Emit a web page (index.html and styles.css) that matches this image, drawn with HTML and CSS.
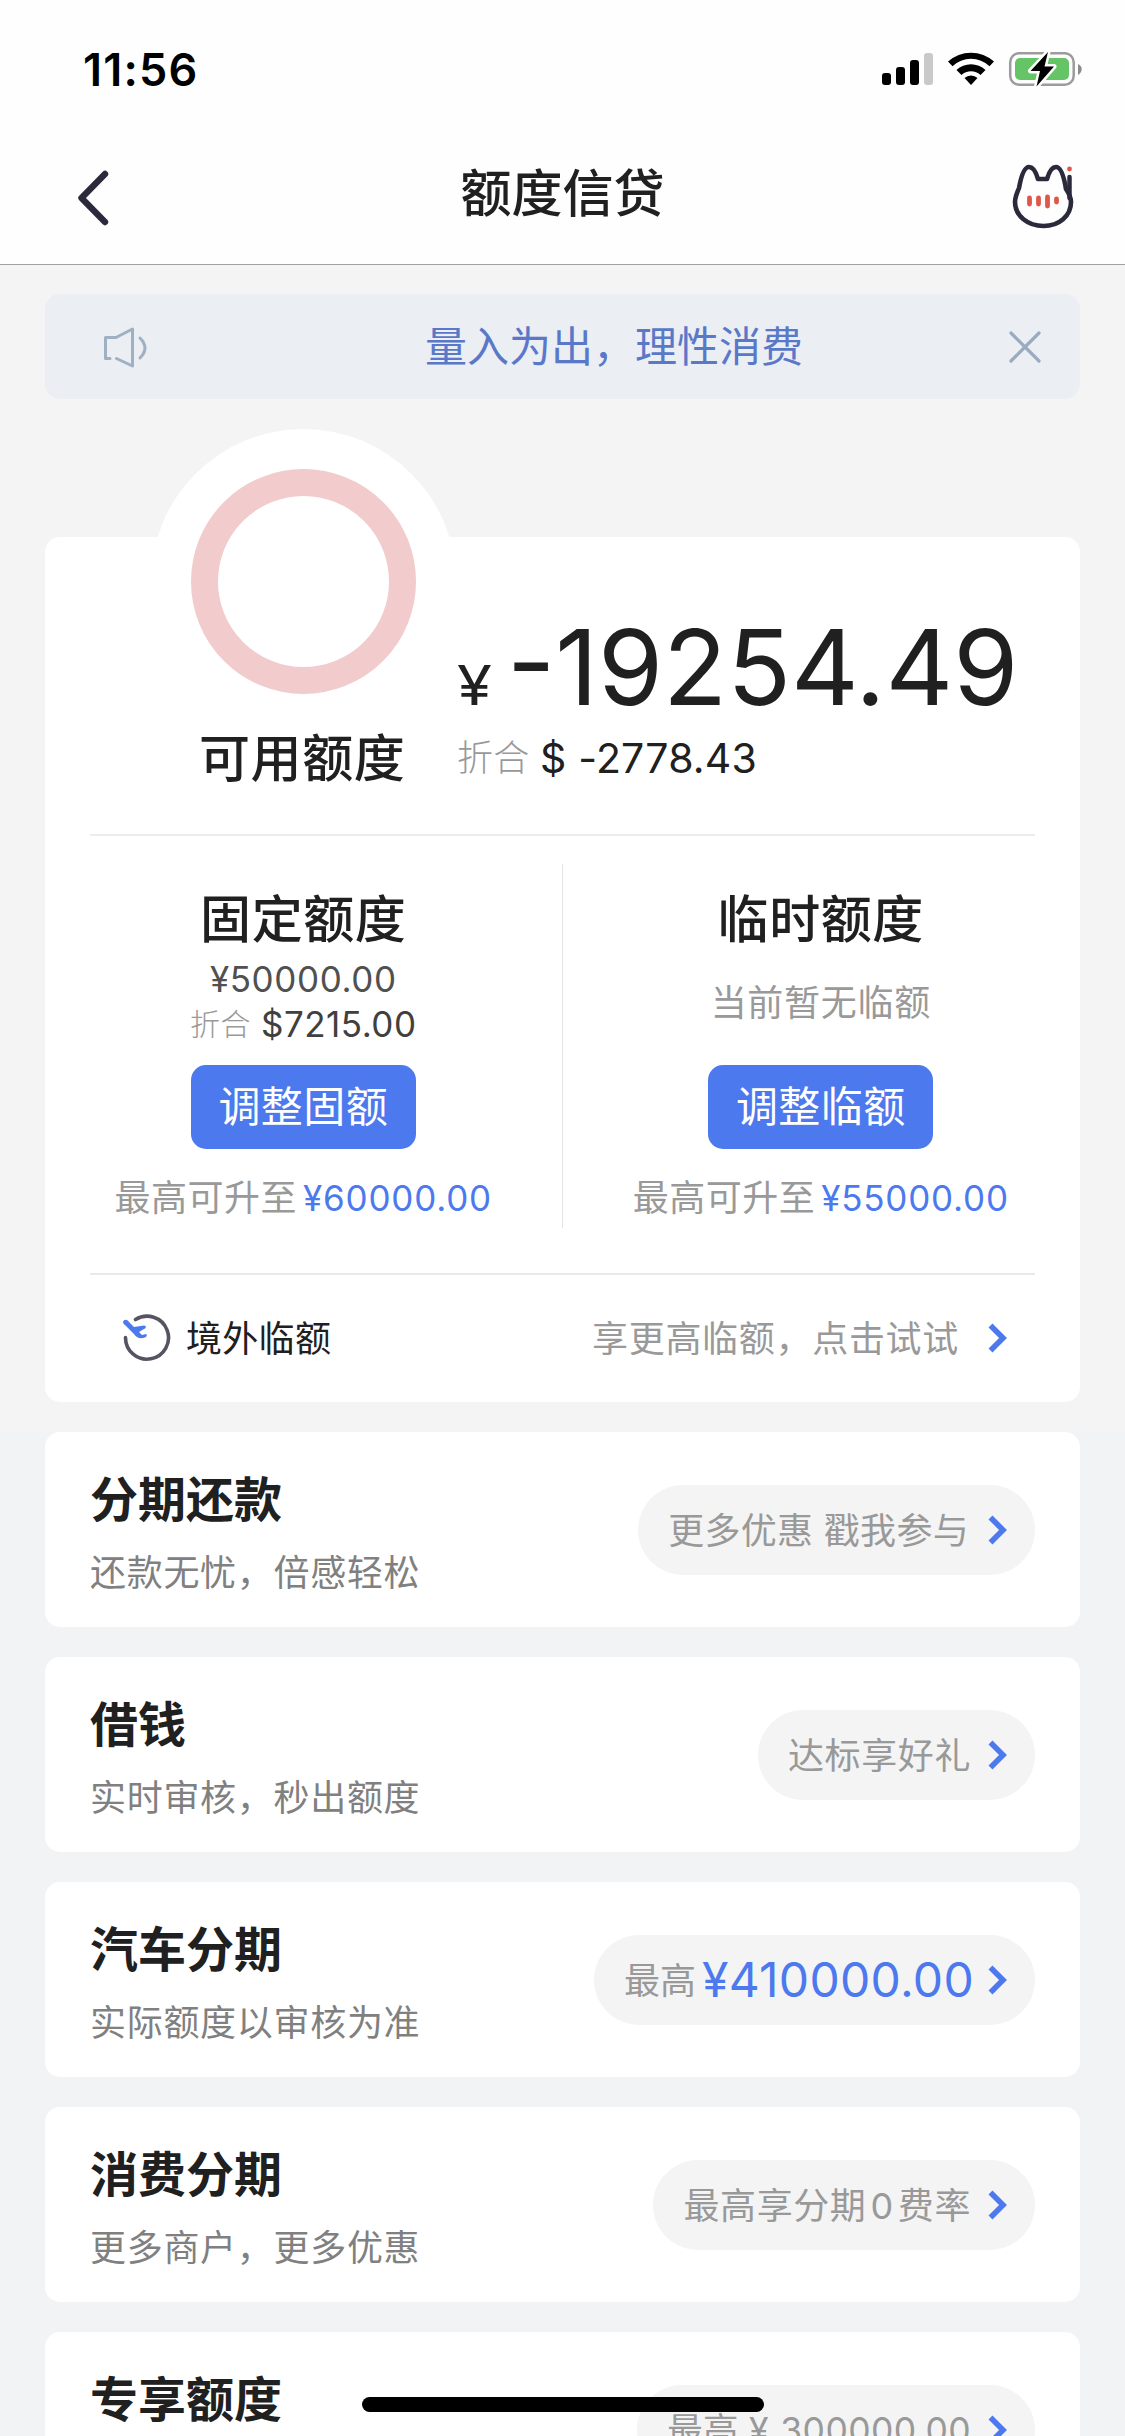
FILE: index.html
```html
<!DOCTYPE html>
<html lang="zh-CN">
<head>
<meta charset="utf-8">
<title>额度信贷</title>
<link rel="stylesheet" href="styles.css">
</head>
<body>
<svg class="defs" width="0" height="0"><symbol id="chev" viewBox="0 0 20 30"><path d="M2.500 2.500 15 15 2.500 27.500" fill="none" stroke="#4d79ee" stroke-width="5.600"/></symbol></svg>
<header class="top">
  <div class="status">
    <span class="time">11:56</span>
    <svg class="signals" width="202" height="36" viewBox="0 0 202 36">
      <g><rect x="0" y="21" width="9" height="12" rx="3"/><rect x="14" y="15" width="9" height="18" rx="3"/><rect x="28" y="8" width="9" height="25" rx="3"/><rect x="42" y="1" width="9" height="32" rx="3" fill="#c9c9c9"/></g>
      <path d="M66 9.600A34 34 0 0 1 112 9.600L107.500 14.200A27 27 0 0 0 70.500 14.200Z"/>
      <path d="M74.500 18A21 21 0 0 1 103.500 18L98.500 23A14 14 0 0 0 79.500 23Z"/>
      <path d="M82.500 26A9.500 9.500 0 0 1 95.500 26L89 33Z"/>
      <rect x="128.200" y="1.200" width="63.500" height="31.500" rx="9" fill="none" stroke="#9c9c9c" stroke-width="2.500"/>
      <rect x="133" y="6" width="54" height="22" rx="5" fill="#65c466"/>
      <path d="M196 12c5 2 5 8 0 11z" fill="#8c8c8c"/>
      <path d="M166 0 148.500 19H158L154.500 34.500 172 14.500H162.500Z" stroke="#fff" stroke-width="5" stroke-linejoin="round"/>
      <path d="M166 0 148.500 19H158L154.500 34.500 172 14.500H162.500Z"/>
    </svg>
  </div>
  <nav class="nav">
    <svg class="back" width="36" height="60" viewBox="0 0 36 60"><path d="M31 6 7.500 30 31 54" fill="none" stroke="#2b2a3c" stroke-width="6.400" stroke-linecap="round" stroke-linejoin="round"/></svg>
    <h1>额度信贷</h1>
    <svg class="cat" width="62" height="66" viewBox="0 0 62 66" fill="none" stroke-linecap="round">
      <path d="M7 24C9 13 12 3 17 3C21 3 24 8 26 15H35C37 8 40 3 44 3C49 3 52 13 54 25C58 31 59 34 59 38C59 52 47 62 31.500 62C16 62 3 52 3 38C3 33 5 29 7 24Z" stroke="#2b2a3c" stroke-width="4.600" stroke-linejoin="round"/>
      <path d="M57.500 13V34" stroke="#2b2a3c" stroke-width="4.500"/>
      <path d="M57.500 5v.1" stroke="#df5748" stroke-width="4.800"/>
      <path d="M17.500 34v6M26.500 34v6M35.500 33v9M44.500 35v3" stroke="#df5748" stroke-width="4.800"/>
    </svg>
  </nav>
</header>
<main>
  <div class="notice">
    <svg width="46" height="44" viewBox="0 0 46 44" fill="none" stroke="#9fb0c3" stroke-width="3" stroke-linejoin="round" stroke-linecap="round"><path d="M8 33.500H3.500V12.500H14L30.500 4V41L14.500 33.500"/><path d="M38 13Q48 23 38 33"/></svg>
    <span>量入为出，理性消费</span>
    <svg width="32" height="32" viewBox="0 0 32 32"><path d="M2 2 30 30M30 2 2 30" stroke="#9aabc0" stroke-width="3.200" stroke-linecap="round"/></svg>
  </div>
  <section class="card limit">
    <div class="halo"><div class="ring"></div></div>
    <div class="summary">
      <h2>可用额度</h2>
      <div class="balance">
        <div class="amount"><span class="yen">¥</span><span class="big">-19254.49</span></div>
        <div class="usd"><span class="muted">折合</span><span>$ -2778.43</span></div>
      </div>
    </div>
    <div class="halves">
      <div class="half">
        <h2>固定额度</h2>
        <div class="cny">¥50000.00</div>
        <div class="conv"><span class="muted">折合</span><span>$7215.00</span></div>
        <button>调整固额</button>
        <p class="raise"><span class="muted">最高可升至</span><b>¥60000.00</b></p>
      </div>
      <div class="half">
        <h2>临时额度</h2>
        <div class="none">当前暂无临额</div>
        <button>调整临额</button>
        <p class="raise"><span class="muted">最高可升至</span><b>¥55000.00</b></p>
      </div>
    </div>
    <div class="abroad">
      <svg width="50" height="50" viewBox="0 0 50 50"><path d="M13.500 6.500A21.500 21.500 0 1 1 3.500 24.500" fill="none" stroke="#565463" stroke-width="3.600" stroke-linecap="round"/><path d="M1 9C2 6 5 6 7 9L12 14 22 12.500C25 13 24 15.500 22 16L17 19 20 22 24 21C26 22 24 25 21 25Q15 26 12 21L3 12Q1 11 1 9Z" fill="#4d79ee"/></svg>
      <span class="abroad-name">境外临额</span>
      <span class="abroad-tip">享更高临额，点击试试</span>
      <svg class="chev"><use href="#chev"/></svg>
    </div>
  </section>
  <div class="list">
    <section class="card item"><div class="info"><h3>分期还款</h3><p>还款无忧，倍感轻松</p></div><div class="pill"><span class="promo">更多优惠 戳我参与</span><svg class="chev"><use href="#chev"/></svg></div></section>
    <section class="card item"><div class="info"><h3>借钱</h3><p>实时审核，秒出额度</p></div><div class="pill"><span>达标享好礼</span><svg class="chev"><use href="#chev"/></svg></div></section>
    <section class="card item"><div class="info"><h3>汽车分期</h3><p>实际额度以审核为准</p></div><div class="pill"><span class="tight">最高</span><b>¥410000.00</b><svg class="chev"><use href="#chev"/></svg></div></section>
    <section class="card item"><div class="info"><h3>消费分期</h3><p>更多商户，更多优惠</p></div><div class="pill"><span>最高享分期<i>0</i>费率</span><svg class="chev"><use href="#chev"/></svg></div></section>
    <section class="card item"><div class="info"><h3>专享额度</h3></div><div class="pill"><span class="sum">最高<i>¥</i> 300000.00</span><svg class="chev"><use href="#chev"/></svg></div></section>
  </div>
</main>
<div class="home"></div>
</body>
</html>
```
FILE: styles.css
```css
* { box-sizing: border-box; margin: 0; padding: 0; }
html, body { width: 1125px; height: 2436px; overflow: hidden; }
body { position: relative; background: #f2f3f5; font-family: Inter, "Noto Sans CJK SC", sans-serif; color: #202020; }
h1, h2, h3, b, i { font-style: normal; }
.defs { position: absolute; }
.muted { color: #999; }

.top { height: 265px; background: #fefefe; border-bottom: 1px solid #a0a0a0; }
.status { height: 138px; display: flex; justify-content: space-between; padding: 0 41px 0 83px; }
.time { margin-top: 42px; font-size: 45px; line-height: 56px; font-weight: 600; letter-spacing: 1.2px; color: #000; }
.signals { margin-top: 52px; }
.nav { display: grid; grid-template-columns: 160px 1fr 160px; align-items: center; height: 120px; }
.back { margin-left: 74px; }
.nav h1 { text-align: center; font-size: 51px; font-weight: 500; line-height: 74px; margin-top: -9px; }
.cat { margin-left: 47px; margin-top: -3px; }

main { background: linear-gradient(#f4f4f4 1167px, #f2f3f5 1167px); padding: 29px 45px 0; }
.notice { height: 105px; border-radius: 15px; background: #ebeef3; display: grid; grid-template-columns: 46px 1fr 32px; align-items: center; padding: 0 39px 0 57px; }
.notice span { padding-left: 71px; text-align: center; font-size: 42px; line-height: 60px; color: #5a78c8; font-weight: 400; }

.card { background: #fff; border-radius: 15px; }
.limit { position: relative; margin-top: 138px; height: 865px; }
.halo { position: absolute; left: 106px; top: -108px; width: 305px; height: 305px; border-radius: 50%; background: #fff; display: flex; align-items: center; justify-content: center; }
.ring { width: 225px; height: 225px; border: 27px solid #f2cbcd; border-radius: 50%; }
h2 { font-size: 51px; line-height: 74px; font-weight: 500; letter-spacing: .6px; }
.summary { position: relative; height: 299px; margin: 0 45px; border-bottom: 2px solid #ededed; display: flex; padding-left: 109px; }
.summary h2 { margin-top: 185px; width: 258px; white-space: nowrap; }
.amount { margin-top: 67px; height: 126px; display: flex; align-items: baseline; }
.yen { font-size: 55px; width: 50px; font-weight: 400; transform: scaleX(1.15); transform-origin: 0 50%; }
.big { font-size: 105px; line-height: 126px; letter-spacing: 0; }
.usd { display: flex; align-items: center; margin-top: 1px; font-size: 41px; line-height: 54px; letter-spacing: .2px; }
.usd .muted { font-size: 36px; width: 83px; font-weight: 300; }

.halves { height: 439px; margin: 0 45px; border-bottom: 2px solid #e9e9e9; display: grid; grid-template-columns: 1fr 1fr; position: relative; }
.halves::after { content: ""; position: absolute; left: 472px; top: 28px; width: 1px; height: 364px; background: #e4e4e4; }
.half { display: flex; flex-direction: column; align-items: center; padding-top: 47px; }
.half:first-child { padding-right: 46px; }
.half:last-child { padding-left: 44px; }
.cny { font-size: 35px; line-height: 44px; color: #505050; letter-spacing: .6px; }
.conv { display: flex; align-items: center; line-height: 46px; font-size: 35px; gap: 10px; color: #404040; letter-spacing: .5px; }
.conv .muted { font-size: 30px; font-weight: 300; }
.none { height: 90px; line-height: 92px; font-size: 36px; color: #999; letter-spacing: .7px; }
.half button { margin-top: 18px; width: 225px; height: 84px; border: 0; border-radius: 15px; background: #4d79ee; color: #fff; font: 400 42px/84px Inter, "Noto Sans CJK SC", sans-serif; letter-spacing: .4px; }
.raise { margin-top: 22px; font-size: 36px; line-height: 54px; display: flex; align-items: center; gap: 6px; white-space: nowrap; letter-spacing: .5px; }
.raise b { font-weight: 400; font-size: 35px; color: #4d79ee; letter-spacing: .8px; }

.abroad { display: flex; align-items: center; height: 126px; padding: 0 72px 0 77px; }
.abroad span { margin-top: -5px; }
.abroad .abroad-name { margin-left: 14px; font-size: 36px; letter-spacing: .3px; }
.abroad .abroad-tip { margin-left: auto; font-size: 36px; color: #999; letter-spacing: .7px; }
.chev { width: 20px; height: 30px; flex: none; }
.abroad .chev { margin-left: 29px; }

.list { margin-top: 30px; display: flex; flex-direction: column; gap: 30px; }
.item { height: 195px; flex: none; display: flex; justify-content: space-between; align-items: center; padding: 0 45px; }
.info { height: 134px; padding-top: 3px; }
.item h3 { font-size: 48px; line-height: 68px; font-weight: 700; }
.item p { font-size: 36px; line-height: 54px; margin-top: 12px; color: #808080; letter-spacing: .7px; }
.pill { height: 90px; border-radius: 45px; background: #f4f4f4; display: flex; align-items: center; padding: 0 27px 0 30px; font-size: 36px; color: #999; white-space: nowrap; }
.pill span { letter-spacing: .6px; margin-top: -4px; }
.pill .promo { letter-spacing: .3px; margin-right: 2px; }
.pill .tight { letter-spacing: 0; }
.pill .chev { margin-left: 17px; }
.pill b { font-size: 48px; font-weight: 400; color: #4d79ee; margin: 0 -3px 0 6px; letter-spacing: .3px; }
.pill i { margin: 0 4px; }
.pill .sum { font-size: 35.5px; letter-spacing: .4px; }
.pill .sum i { margin: 0 1px 0 10px; }

.home { position: absolute; left: 362px; top: 2397px; width: 402px; height: 15px; border-radius: 8px; background: #000; }
```
